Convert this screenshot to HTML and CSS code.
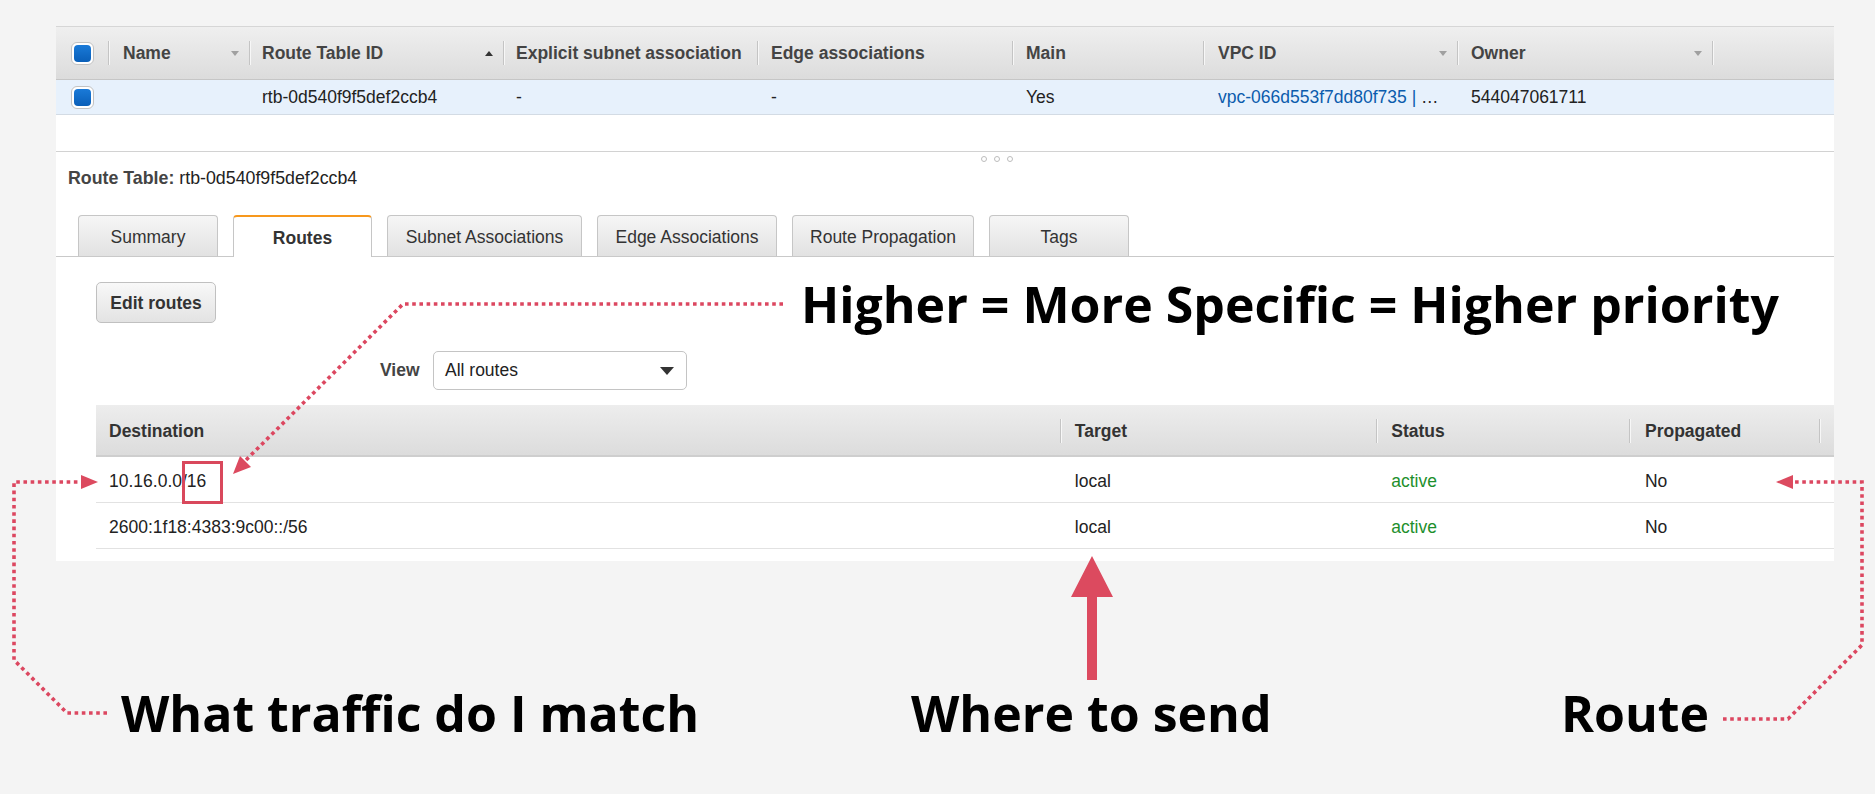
FILE: index.html
```html
<!DOCTYPE html>
<html lang="en">
<head>
<meta charset="utf-8">
<title>Route Table</title>
<link rel="stylesheet" href="styles.css">
</head>
<body>
<div class="page">
  <div class="panel">
    <div class="grid">
      <div class="ghead">
        <div class="gc c-cb"><span class="cb"></span></div>
        <div class="gc sep w-name">Name<span class="dd"></span></div>
        <div class="gc sep w-rt">Route Table ID<span class="sort"></span></div>
        <div class="gc sep w-ex">Explicit subnet association</div>
        <div class="gc sep w-edge">Edge associations</div>
        <div class="gc sep w-main">Main</div>
        <div class="gc sep w-vpc">VPC ID<span class="dd"></span></div>
        <div class="gc sep w-own">Owner<span class="dd"></span></div>
        <div class="gc sep w-rest"></div>
      </div>
      <div class="grow">
        <div class="gc c-cb"><span class="cb"></span></div>
        <div class="gc w-name"></div>
        <div class="gc w-rt">rtb-0d540f9f5def2ccb4</div>
        <div class="gc w-ex">-</div>
        <div class="gc w-edge">-</div>
        <div class="gc w-main">Yes</div>
        <div class="gc w-vpc"><span class="link">vpc-066d553f7dd80f735 |</span>&nbsp;…</div>
        <div class="gc w-own">544047061711</div>
        <div class="gc w-rest"></div>
      </div>
      <div class="gblank"></div>
    </div>

    <div class="detail">
      <div class="handle"><i></i><i></i><i></i></div>
      <div class="rt-title"><b>Route Table:</b> rtb-0d540f9f5def2ccb4</div>
      <div class="tabs">
        <div class="tab t1">Summary</div>
        <div class="tab t2 active">Routes</div>
        <div class="tab t3">Subnet Associations</div>
        <div class="tab t4">Edge Associations</div>
        <div class="tab t5">Route Propagation</div>
        <div class="tab t6">Tags</div>
      </div>
      <div class="tab-body">
        <div class="btn">Edit routes</div>
        <div class="view-row">
          <span class="view-label">View</span>
          <div class="select">All routes<span class="caret"></span></div>
        </div>
        <div class="rtable">
          <div class="rhead">
            <div class="rc r-dest">Destination</div>
            <div class="rc sep r-tgt">Target</div>
            <div class="rc sep r-st">Status</div>
            <div class="rc sep r-pr">Propagated</div>
            <div class="rc sep r-end"></div>
          </div>
          <div class="rrow">
            <div class="rc r-dest">10.16.0.0/16</div>
            <div class="rc r-tgt">local</div>
            <div class="rc r-st active-txt">active</div>
            <div class="rc r-pr">No</div>
            <div class="rc r-end"></div>
          </div>
          <div class="rrow">
            <div class="rc r-dest">2600:1f18:4383:9c00::/56</div>
            <div class="rc r-tgt">local</div>
            <div class="rc r-st active-txt">active</div>
            <div class="rc r-pr">No</div>
            <div class="rc r-end"></div>
          </div>
        </div>
      </div>
    </div>
  </div>
</div>

<div class="annot">
  <svg class="annot-svg" width="1875" height="794" viewBox="0 0 1875 794" xmlns="http://www.w3.org/2000/svg">
    <g class="dots">
      <polyline points="783,304 403,304 245,461"/>
      <polyline points="107,713 67,713 14,660 14,482 82,482"/>
      <polyline points="1723,719 1788,719 1862,645 1862,482 1792,482"/>
    </g>
    <g class="heads">
      <polygon points="233,474 251,467 240,456"/>
      <polygon points="98,482 81,475 81,489"/>
      <polygon points="1776,482 1793,475 1793,489"/>
      <polygon points="1092,556 1113,597 1097,597 1097,680 1087,680 1087,597 1071,597"/>
    </g>
    <rect class="hl" x="183.5" y="462.5" width="38" height="40"/>
  </svg>
  <div class="lbl lbl-higher">Higher = More Specific = Higher priority</div>
  <div class="lbl lbl-what">What traffic do I match</div>
  <div class="lbl lbl-where">Where to send</div>
  <div class="lbl lbl-route">Route</div>
</div>
</body>
</html>
```

FILE: styles.css
```css
* { box-sizing: border-box; }

html, body {
  margin: 0;
  padding: 0;
}

body {
  width: 1875px;
  height: 794px;
  overflow: hidden;
  background: #f4f4f4;
  font-family: "Liberation Sans", Arial, Helvetica, sans-serif;
  font-size: 17.5px;
  color: #222;
  position: relative;
}

.page {
  padding: 26px 0 0 56px;
}

.panel {
  width: 1778px;
  background: #fff;
  padding-bottom: 12px;
}

/* ---------- upper grid ---------- */
.ghead, .grow {
  display: flex;
}

.ghead {
  height: 54px;
  border-top: 1px solid #d6d6d6;
  border-bottom: 1px solid #c6c6c6;
  background: linear-gradient(#efefef, #dcdcdc);
  font-weight: bold;
  color: #444;
}

.grow {
  height: 35px;
  background: #e7f1fc;
  border-bottom: 1px solid #d3dbe4;
  padding-top: 1px;
}

.gblank {
  height: 37px;
  border-bottom: 1px solid #d2d2d2;
}

.gc {
  display: flex;
  align-items: center;
  padding-left: 14px;
  padding-right: 10px;
  white-space: nowrap;
}

.ghead .gc { padding-top: 1px; }

.sep {
  background:
    linear-gradient(#c4c4c4, #c4c4c4) 0 50% / 1px 24px no-repeat,
    linear-gradient(#f7f7f7, #f7f7f7) 1px 50% / 1px 24px no-repeat;
}

.c-cb { width: 52px; padding-left: 15px; }
.w-name { width: 141px; padding-left: 15px; }
.w-rt { width: 254px; padding-left: 13px; }
.w-ex { width: 254px; padding-left: 13px; padding-right: 2px; }
.w-edge { width: 255px; }
.w-main { width: 191px; }
.w-vpc { width: 254px; padding-left: 15px; }
.w-own { width: 255px; }
.w-rest { flex: 1; }

.cb {
  display: block;
  width: 23px;
  height: 23px;
  border: 1px solid #c2c2c2;
  border-radius: 6px;
  background: #fff;
  padding: 2px;
}
.cb::after {
  content: "";
  display: block;
  width: 100%;
  height: 100%;
  border-radius: 4px;
  background: linear-gradient(#1a7ad8, #0a5fb8);
}

.dd, .sort {
  margin-left: auto;
  width: 0;
  height: 0;
  border-left: 4.5px solid transparent;
  border-right: 4.5px solid transparent;
}
.dd {
  border-top: 5px solid #a0a0a0;
}
.sort {
  border-bottom: 5px solid #333;
}

.link { color: #0b5cad; }

/* ---------- detail ---------- */
.handle {
  display: flex;
  gap: 7px;
  height: 8px;
  margin-top: 3px;
  padding-left: 925px;
  align-items: center;
}
.handle i {
  display: block;
  width: 6px;
  height: 6px;
  border: 1px solid #bdbdbd;
  border-radius: 50%;
}

.rt-title {
  margin-top: 4px;
  padding-left: 12px;
  line-height: 22px;
  font-size: 17.8px;
  color: #222;
}
.rt-title b { color: #444; }

.tabs {
  display: flex;
  gap: 15px;
  margin-top: 26px;
  padding-left: 22px;
  height: 42px;
  border-bottom: 1px solid #c9c9c9;
}

.tab {
  height: 41px;
  border: 1px solid #c6c6c6;
  border-bottom: none;
  border-radius: 4px 4px 0 0;
  background: linear-gradient(#f6f6f6, #e2e2e2);
  display: flex;
  align-items: center;
  justify-content: center;
  color: #333;
  padding-top: 3px;
}
.t1 { width: 140px; }
.t2 { width: 139px; }
.t3 { width: 195px; }
.t4 { width: 180px; }
.t5 { width: 182px; }
.t6 { width: 140px; }

.tab.active {
  background: #fff;
  height: 42px;
  border-top: 2px solid #f7981d;
  font-weight: bold;
  color: #333;
}

.tab-body {
  padding-left: 40px;
}

.btn {
  margin-top: 25px;
  width: 120px;
  height: 41px;
  border: 1px solid #c0c0c0;
  border-radius: 5px;
  background: linear-gradient(#f8f8f8, #e3e3e3);
  display: flex;
  align-items: center;
  justify-content: center;
  font-weight: bold;
  color: #333;
  padding-top: 1px;
}

.view-row {
  display: flex;
  align-items: center;
  margin-top: 28px;
  padding-left: 284px;
  height: 39px;
}
.view-label {
  font-weight: bold;
  color: #444;
  width: 53px;
}
.select {
  width: 254px;
  height: 39px;
  border: 1px solid #c4c4c4;
  border-radius: 5px;
  display: flex;
  align-items: center;
  padding-left: 11px;
  padding-right: 12px;
  color: #222;
}
.caret {
  margin-left: auto;
  width: 0;
  height: 0;
  border-left: 7px solid transparent;
  border-right: 7px solid transparent;
  border-top: 8px solid #333;
}

/* ---------- routes table ---------- */
.rtable {
  margin-top: 15px;
}
.rhead, .rrow {
  display: flex;
}
.rhead {
  height: 52px;
  background: linear-gradient(#ededed, #dcdcdc);
  border-bottom: 2px solid #cecece;
  font-weight: bold;
  color: #333;
  padding-top: 2px;
}
.rrow {
  height: 46px;
  border-bottom: 1px solid #e2e2e2;
  padding-top: 3px;
}
.rc {
  display: flex;
  align-items: center;
  padding-left: 15px;
  white-space: nowrap;
}
.r-dest { width: 969px; padding-left: 13px; }
.r-tgt { width: 318px; }
.r-st { width: 254px; }
.r-pr { width: 191px; padding-left: 16px; }
.r-end { flex: 1; }

.active-txt { color: #1d8f2c; }

/* ---------- annotations ---------- */
.annot {
  position: absolute;
  left: 0;
  top: 0;
  width: 1875px;
  height: 794px;
  pointer-events: none;
}
.annot-svg {
  position: absolute;
  left: 0;
  top: 0;
}
.dots polyline {
  fill: none;
  stroke: #dc4760;
  stroke-width: 3.6;
  stroke-dasharray: 3.6 3.6;
}
.heads polygon {
  fill: #dc4a5f;
}
.hl {
  fill: none;
  stroke: #d9485c;
  stroke-width: 3;
}

.lbl {
  position: absolute;
  font-family: "Open Sans", "Noto Sans", sans-serif;
  font-weight: 700;
  font-size: 50px;
  line-height: 1;
  color: #000;
  white-space: nowrap;
}
.lbl-higher { left: 801px; top: 279px; }
.lbl-what { left: 121px; top: 688px; }
.lbl-where { left: 911px; top: 688px; }
.lbl-route { left: 1561px; top: 688px; }
```
